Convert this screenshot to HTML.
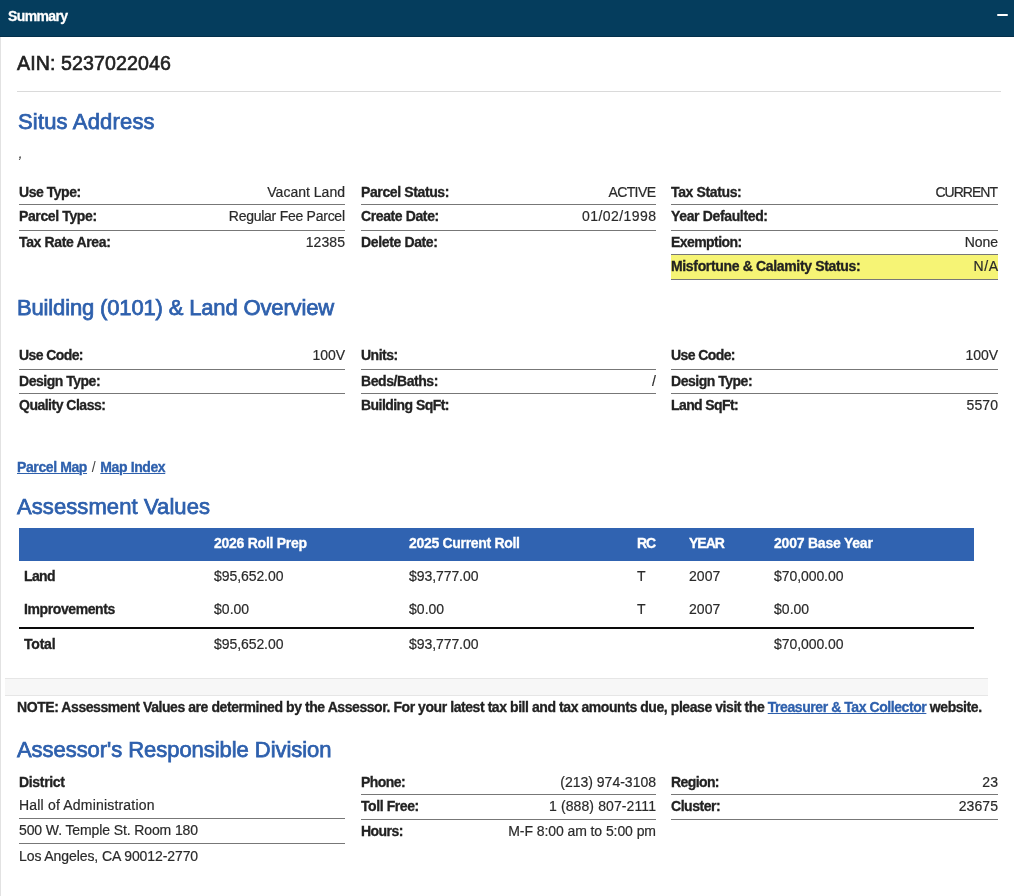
<!DOCTYPE html>
<html lang="en"><head>
<meta charset="utf-8">
<title>Summary</title>
<style>
*{box-sizing:border-box;margin:0;padding:0}
html,body{width:1014px;height:896px;overflow:hidden;background:#fff}
body{font-family:"Liberation Sans",sans-serif;font-size:14px;line-height:16px;color:#222;position:relative}
.abs{position:absolute;white-space:nowrap}
.r span,.c{-webkit-text-stroke:.2px currentColor}
.th .c,.c.b,.r b,.note,.links a,.hdr .t{-webkit-text-stroke:.3px currentColor}
.hdr{left:0;top:0;width:1014px;height:37px;background:#053d5d;border-bottom:1px solid #03304b}
.hdr .t{position:absolute;left:8px;top:8px;font-weight:bold;color:#fff}
.hdr .m{position:absolute;left:997px;top:14px;width:11px;height:2px;background:#fff;border-radius:1px}
.lb{left:0;top:37px;width:1px;height:859px;background:#e2e2e2}
.ain{left:17px;top:52px;font-size:19.6px;line-height:22px;color:#222;-webkit-text-stroke:.6px #222;letter-spacing:.08px}
.hr{left:17px;top:91px;width:984px;height:1px;background:#dadada}
h2{position:absolute;font-weight:normal;font-size:22px;line-height:25px;color:#2e60ad;-webkit-text-stroke:.75px #2e60ad;white-space:nowrap}
.col{position:absolute;top:0}
.c1{left:19px;width:326px}.c2{left:361px;width:295px}.c3{left:671px;width:327px}
.r{position:absolute;left:0;width:100%;display:flex;justify-content:space-between;align-items:flex-start;border-bottom:1px solid #777;white-space:nowrap;padding-top:3px}
.r.nb{border-bottom:0}
.r b{font-weight:bold;letter-spacing:-.33px}
.r span{color:#2a2a2a}
.hl{background:#f6f475}
a{color:#2e60ad;text-decoration:underline;text-decoration-thickness:1px;text-underline-offset:1px}
.links{left:17px;top:459px;font-weight:bold;letter-spacing:-.24px}
.th{left:19px;top:528px;width:955px;height:33px;background:#3063b1}
.c{position:absolute;white-space:nowrap;color:#2a2a2a}
.th .c{top:7px;color:#fff;font-weight:bold;letter-spacing:-.26px}
.c.b{font-weight:bold;color:#222;letter-spacing:-.38px}
.tl{left:19px;top:627px;width:955px;height:2px;background:#0a0a0a}
.bar{left:5px;top:678px;width:983px;height:18px;background:#f7f7f7;border-top:1px solid #e6e6e6;border-bottom:1px solid #e6e6e6}
.note{left:17px;top:699px;font-weight:bold;letter-spacing:-.404px}
</style>
</head>
<body><div id="wrap" style="position:absolute;left:0;top:0;width:1014px;height:896px;will-change:transform">
<div class="abs hdr"><div class="t" style="letter-spacing: -0.61px;">Summary</div><div class="m"></div></div>
<div class="abs lb"></div>
<div class="abs ain" style="letter-spacing: 0.09px;">AIN: 5237022046</div>
<div class="abs hr"></div>

<h2 style="left:18px;top:109px;letter-spacing:.17px">Situs Address</h2>
<div class="abs" style="left:18.5px;top:145px;color:#333;font-style:italic;font-size:15px">,</div>

<div class="col c1">
  <div class="r" style="top:179px;height:26px;padding-top:5px"><b style="letter-spacing: -0.47px;">Use Type:</b><span style="letter-spacing: 0.01px; margin-right: -0.01px;">Vacant Land</span></div>
  <div class="r" style="top:205px;height:26px"><b style="letter-spacing: -0.38px;">Parcel Type:</b><span style="letter-spacing: -0.26px; margin-right: 0.26px;">Regular Fee Parcel</span></div>
  <div class="r nb" style="top:231px;height:24px"><b style="letter-spacing: -0.36px;">Tax Rate Area:</b><span style="letter-spacing: 0.08px; margin-right: -0.08px;">12385</span></div>
</div>
<div class="col c2">
  <div class="r" style="top:179px;height:26px;padding-top:5px"><b style="letter-spacing: -0.38px;">Parcel Status:</b><span style="letter-spacing: -0.59px; margin-right: 0.59px;">ACTIVE</span></div>
  <div class="r" style="top:205px;height:26px"><b style="letter-spacing: -0.39px;">Create Date:</b><span style="letter-spacing: 0.44px; margin-right: -0.44px;">01/02/1998</span></div>
  <div class="r nb" style="top:231px;height:24px"><b style="letter-spacing: -0.36px;">Delete Date:</b><span></span></div>
</div>
<div class="col c3">
  <div class="r" style="top:179px;height:26px;padding-top:5px"><b style="letter-spacing: -0.37px;">Tax Status:</b><span style="letter-spacing: -0.99px; margin-right: 0.99px;">CURRENT</span></div>
  <div class="r" style="top:205px;height:26px"><b style="letter-spacing: -0.35px;">Year Defaulted:</b><span></span></div>
  <div class="r" style="top:231px;height:24px"><b style="letter-spacing: -0.57px;">Exemption:</b><span style="letter-spacing: -0.08px; margin-right: 0.08px;">None</span></div>
  <div class="r hl" style="top:255px;height:25px"><b style="letter-spacing: -0.34px;">Misfortune &amp; Calamity Status:</b><span style="letter-spacing: 0.52px; margin-right: -0.52px;">N/A</span></div>
</div>

<h2 style="left: 17px; top: 295px; letter-spacing: -0.15px;">Building (0101) &amp; Land Overview</h2>

<div class="col c1">
  <div class="r" style="top:343px;height:27px;padding-top:4px"><b style="letter-spacing: -0.59px;">Use Code:</b><span style="letter-spacing: -0.04px; margin-right: 0.04px;">100V</span></div>
  <div class="r" style="top:370px;height:24px"><b style="letter-spacing: -0.48px;">Design Type:</b><span></span></div>
  <div class="r nb" style="top:394px;height:24px"><b style="letter-spacing: -0.5px;">Quality Class:</b><span></span></div>
</div>
<div class="col c2">
  <div class="r" style="top:343px;height:27px;padding-top:4px"><b style="letter-spacing: -0.5px;">Units:</b><span></span></div>
  <div class="r" style="top:370px;height:24px"><b style="letter-spacing: -0.43px;">Beds/Baths:</b><span>/</span></div>
  <div class="r nb" style="top:394px;height:24px"><b style="letter-spacing: -0.55px;">Building SqFt:</b><span></span></div>
</div>
<div class="col c3">
  <div class="r" style="top:343px;height:27px;padding-top:4px"><b style="letter-spacing: -0.59px;">Use Code:</b><span style="letter-spacing: -0.04px; margin-right: 0.04px;">100V</span></div>
  <div class="r" style="top:370px;height:24px"><b style="letter-spacing: -0.48px;">Design Type:</b><span></span></div>
  <div class="r nb" style="top:394px;height:24px"><b style="letter-spacing: -0.6px;">Land SqFt:</b><span style="letter-spacing: 0.08px; margin-right: -0.08px;">5570</span></div>
</div>

<div class="abs links" style="letter-spacing: -0.39px;"><a>Parcel Map</a><span style="font-weight:normal;color:#444;letter-spacing:0;padding:0 .8px"> / </span><a>Map Index</a></div>

<h2 style="left: 17px; top: 494px; letter-spacing: 0.09px;">Assessment Values</h2>

<div class="abs th">
  <div class="c" style="left: 195px; letter-spacing: -0.26px;">2026 Roll Prep</div>
  <div class="c" style="left:390px;letter-spacing:-.31px">2025 Current Roll</div>
  <div class="c" style="left: 618px; letter-spacing: -1.05px;">RC</div>
  <div class="c" style="left: 670px; letter-spacing: -1px;">YEAR</div>
  <div class="c" style="left:755px;letter-spacing:-.22px">2007 Base Year</div>
</div>
<div class="c b" style="left: 24px; top: 568px; letter-spacing: -0.66px;">Land</div>
<div class="c" style="left: 214px; top: 568px; letter-spacing: -0.07px;">$95,652.00</div>
<div class="c" style="left: 409px; top: 568px; letter-spacing: -0.07px;">$93,777.00</div>
<div class="c" style="left:637px;top:568px">T</div>
<div class="c" style="left: 689px; top: 568px; letter-spacing: 0.08px;">2007</div>
<div class="c" style="left: 774px; top: 568px; letter-spacing: -0.07px;">$70,000.00</div>

<div class="c b" style="left: 24px; top: 601px; letter-spacing: -0.4px;">Improvements</div>
<div class="c" style="left: 214px; top: 601px; letter-spacing: 0.03px;">$0.00</div>
<div class="c" style="left: 409px; top: 601px; letter-spacing: 0.03px;">$0.00</div>
<div class="c" style="left:637px;top:601px">T</div>
<div class="c" style="left: 689px; top: 601px; letter-spacing: 0.08px;">2007</div>
<div class="c" style="left: 774px; top: 601px; letter-spacing: 0.03px;">$0.00</div>

<div class="abs tl"></div>
<div class="c b" style="left: 24px; top: 636px; letter-spacing: -0.21px;">Total</div>
<div class="c" style="left: 214px; top: 636px; letter-spacing: -0.07px;">$95,652.00</div>
<div class="c" style="left: 409px; top: 636px; letter-spacing: -0.07px;">$93,777.00</div>
<div class="c" style="left: 774px; top: 636px; letter-spacing: -0.07px;">$70,000.00</div>

<div class="abs bar"></div>
<div class="abs note" style="letter-spacing: -0.43px;">NOTE: Assessment Values are determined by the Assessor. For your latest tax bill and tax amounts due, please visit the <a>Treasurer &amp; Tax Collector</a> website.</div>

<h2 style="left: 17px; top: 737px; letter-spacing: -0.05px;">Assessor's Responsible Division</h2>

<div class="col c1">
  <div class="r nb" style="top:770px;height:23px;padding-top:4px"><b style="letter-spacing: -0.33px;">District</b><span></span></div>
  <div class="r" style="top:793px;height:26px;padding-top:4px"><span style="letter-spacing: 0.19px;">Hall of Administration</span></div>
  <div class="r" style="top:819px;height:25px"><span style="letter-spacing: -0.11px;">500 W. Temple St. Room 180</span></div>
  <div class="r nb" style="top:844px;height:25px;padding-top:4px"><span style="letter-spacing: -0.09px;">Los Angeles, CA 90012-2770</span></div>
</div>
<div class="col c2">
  <div class="r" style="top:770px;height:25px;padding-top:4px"><b style="letter-spacing: -0.55px;">Phone:</b><span style="letter-spacing: 0px; margin-right: 0px;">(213) 974-3108</span></div>
  <div class="r" style="top:795px;height:25px"><b style="letter-spacing: -0.41px;">Toll Free:</b><span style="letter-spacing: 0.11px; margin-right: -0.11px;">1 (888) 807-2111</span></div>
  <div class="r nb" style="top:820px;height:25px"><b style="letter-spacing: -0.54px;">Hours:</b><span style="letter-spacing: -0.08px; margin-right: 0.08px;">M-F 8:00 am to 5:00 pm</span></div>
</div>
<div class="col c3">
  <div class="r" style="top:770px;height:25px;padding-top:4px"><b style="letter-spacing: -0.6px;">Region:</b><span style="letter-spacing: 0.09px; margin-right: -0.09px;">23</span></div>
  <div class="r" style="top:795px;height:25px"><b style="letter-spacing: -0.45px;">Cluster:</b><span style="letter-spacing: 0.08px; margin-right: -0.08px;">23675</span></div>
</div>
</div>

</body></html>
